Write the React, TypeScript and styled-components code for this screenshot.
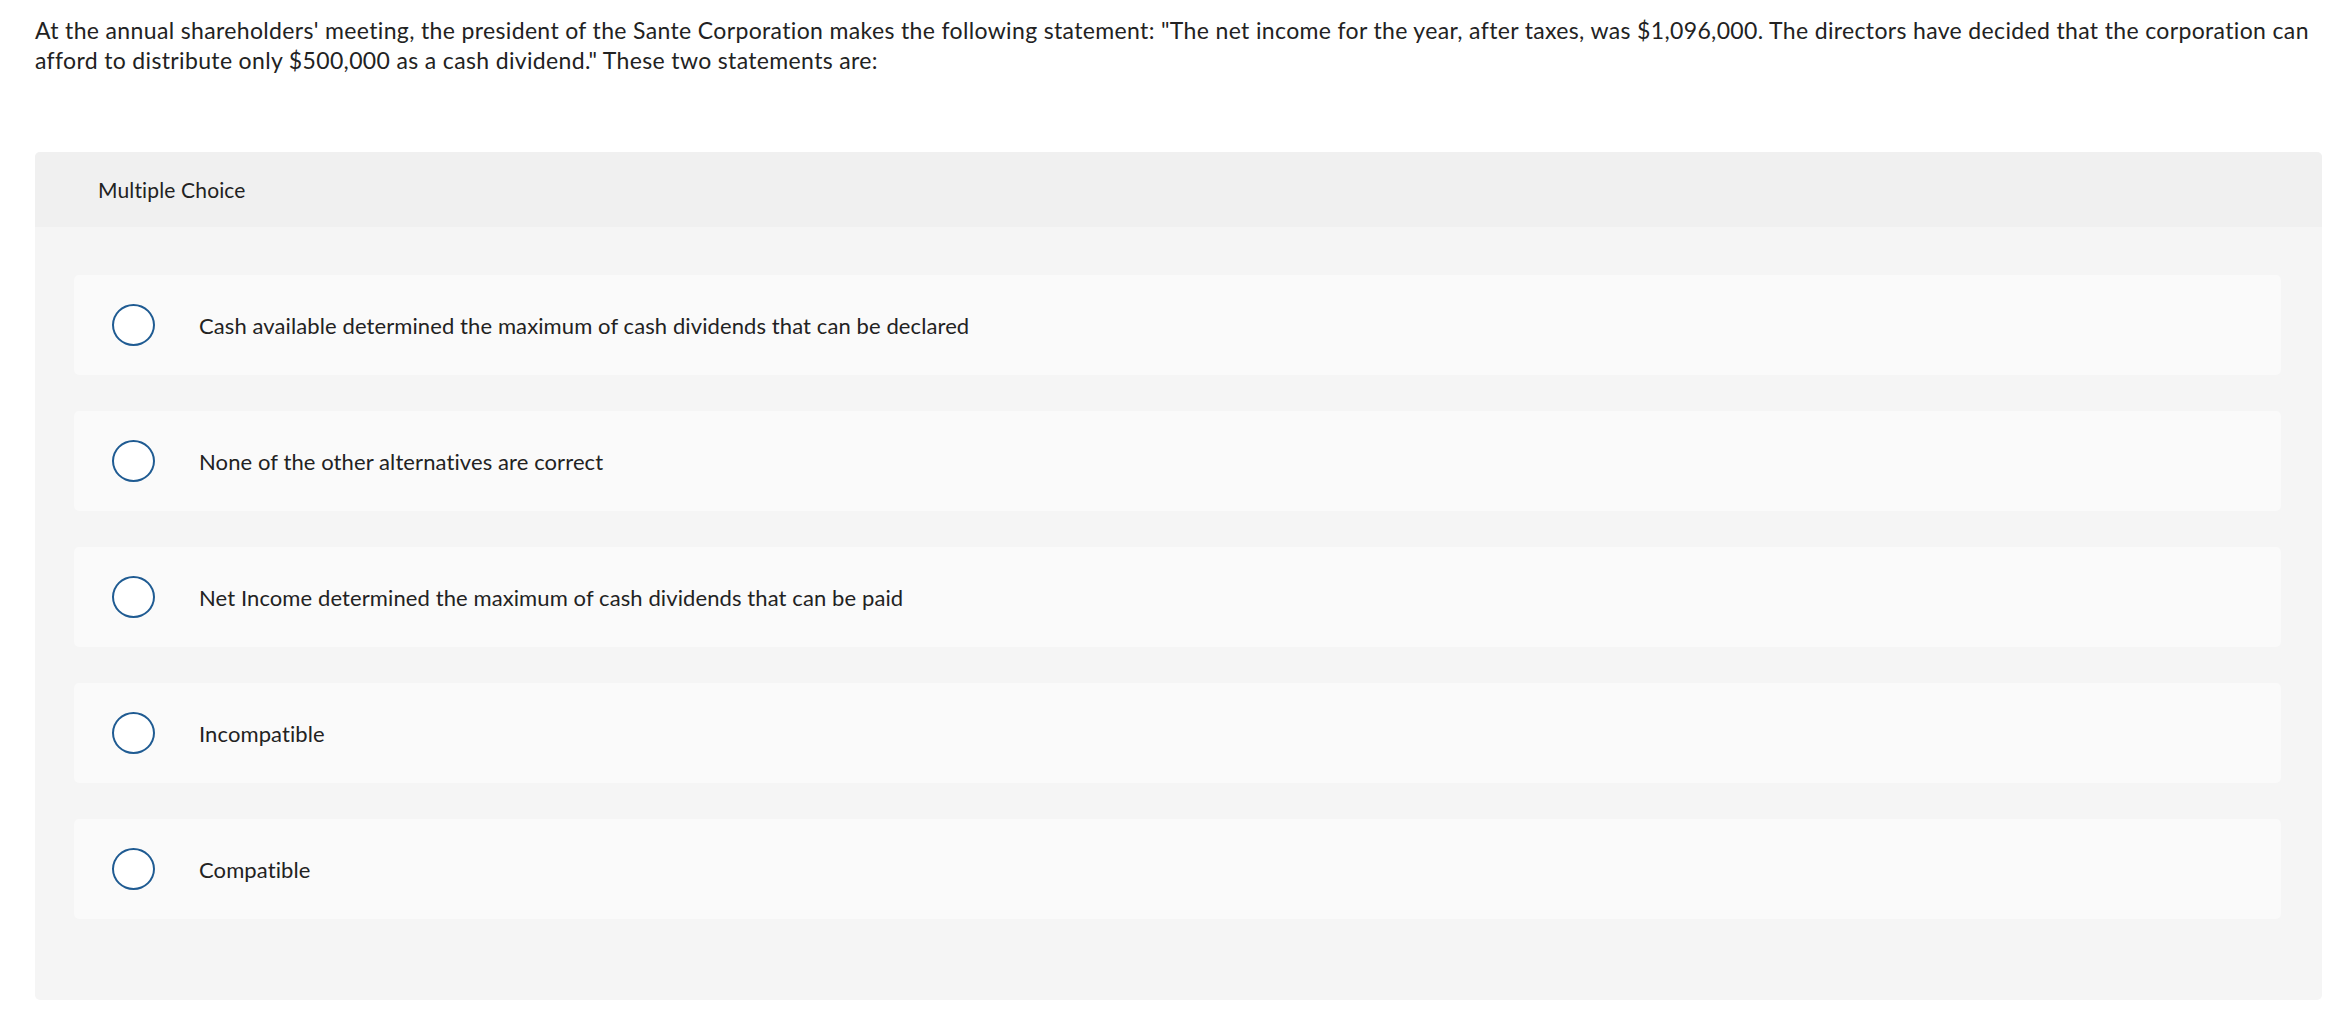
import React from "react";
import styled, { createGlobalStyle } from "styled-components";

const GlobalStyle = createGlobalStyle`
  html, body {
    margin: 0;
    padding: 0;
    background: #ffffff;
  }
  body {
    font-family: Lato, "Open Sans", "Liberation Sans", sans-serif;
    color: #222222;
  }
`;

const Page = styled.main`
  padding: 15px 30px 24px 35px;
`;

const Question = styled.p`
  margin: 0 0 77px 0;
  font-size: 23px;
  letter-spacing: 0.35px;
  line-height: 30px;
  color: #222222;
`;

const Panel = styled.section`
  border-radius: 5px;
  overflow: hidden;
  background: #f5f5f5;
`;

const PanelHeader = styled.header`
  height: 75px;
  display: flex;
  align-items: center;
  padding-left: 63px;
  background: #f0f0f0;
  font-size: 21px;
  letter-spacing: 0.15px;
  color: #222222;
`;

const Choices = styled.div`
  display: flex;
  flex-direction: column;
  gap: 36px;
  padding: 48px 41px 81px 39px;
`;

const Choice = styled.label`
  height: 100px;
  display: flex;
  align-items: center;
  gap: 44px;
  padding-left: 38px;
  background: #fafafa;
  border-radius: 5px;
  cursor: pointer;
`;

const Radio = styled.span`
  width: 43px;
  height: 42px;
  box-sizing: border-box;
  border: 2px solid #1f5b92;
  border-radius: 50%;
  background: #ffffff;
  flex-shrink: 0;
`;

const ChoiceText = styled.span`
  font-size: 22px;
  letter-spacing: 0.1px;
  color: #222222;
`;

const choices = [
  "Cash available determined the maximum of cash dividends that can be declared",
  "None of the other alternatives are correct",
  "Net Income determined the maximum of cash dividends that can be paid",
  "Incompatible",
  "Compatible",
];

export default function App() {
  return (
    <>
      <GlobalStyle />
      <Page>
        <Question>
          At the annual shareholders' meeting, the president of the Sante Corporation makes the
          following statement: "The net income for the year, after taxes, was $1,096,000. The
          directors have decided that the corporation can afford to distribute only $500,000 as a
          cash dividend." These two statements are:
        </Question>
        <Panel>
          <PanelHeader>Multiple Choice</PanelHeader>
          <Choices>
            {choices.map((c) => (
              <Choice key={c}>
                <Radio />
                <ChoiceText>{c}</ChoiceText>
              </Choice>
            ))}
          </Choices>
        </Panel>
      </Page>
    </>
  );
}
